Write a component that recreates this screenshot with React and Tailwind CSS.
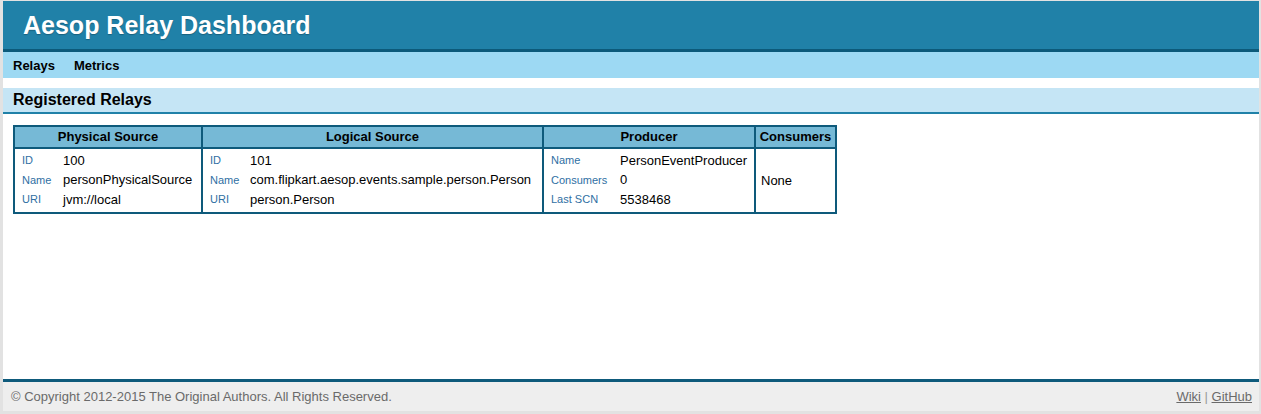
import React from "react";

const font = { fontFamily: '"Liberation Sans", Arial, sans-serif' };

function KV({ rows, labelW }) {
  return (
    <div className="px-[7px] pt-[2px]">
      {rows.map(([k, v]) => (
        <div key={k} className="flex h-[19.5px] items-center">
          <span className={`text-[11px] text-[#2f6fa3] shrink-0 ${labelW}`}>{k}</span>
          <span className="text-[13px] text-black whitespace-nowrap">{v}</span>
        </div>
      ))}
    </div>
  );
}

export default function App() {
  return (
    <div
      style={font}
      className="w-[1261px] h-[414px] bg-[#e2e2e2] pt-[1px] pl-[3px] pr-[2px] pb-[3px] flex"
    >
      <div className="flex-1 flex flex-col bg-white min-w-0">
        <header className="h-[48px] bg-[#2081a8] flex items-center pl-[20px] border-b-[3px] border-[#0c5a7a] box-content">
          <h1 className="text-white font-bold text-[25px] leading-none [text-shadow:0_1px_1px_rgba(0,0,0,0.25)]">
            Aesop Relay Dashboard
          </h1>
        </header>
        <nav className="h-[26px] bg-[#9dd9f3] flex items-center pl-[10px] gap-[19px] text-[13px] font-bold text-black pt-[1px]">
          <span>Relays</span>
          <span>Metrics</span>
        </nav>
        <div className="h-[10px]" />
        <div className="h-[24px] bg-[#c5e5f5] border-b-2 border-[#2081a8] box-content flex items-center pl-[10px]">
          <h2 className="text-[16px] font-bold text-black">Registered Relays</h2>
        </div>
        <main className="flex-1 pl-[10px] pt-[10px]">
          <div className="inline-grid grid-cols-[186px_339px_210px_79px] grid-rows-[20px_63px] gap-[2px] p-[2px] bg-[#0e5a7b]">
            <div className="bg-[#76b9d6] flex items-center justify-center text-[13px] font-bold">Physical Source</div>
            <div className="bg-[#76b9d6] flex items-center justify-center text-[13px] font-bold">Logical Source</div>
            <div className="bg-[#76b9d6] flex items-center justify-center text-[13px] font-bold">Producer</div>
            <div className="bg-[#76b9d6] flex items-center justify-center text-[13px] font-bold">Consumers</div>
            <div className="bg-white">
              <KV
                labelW="w-[41px]"
                rows={[
                  ["ID", "100"],
                  ["Name", "personPhysicalSource"],
                  ["URI", "jvm://local"],
                ]}
              />
            </div>
            <div className="bg-white">
              <KV
                labelW="w-[40px]"
                rows={[
                  ["ID", "101"],
                  ["Name", "com.flipkart.aesop.events.sample.person.Person"],
                  ["URI", "person.Person"],
                ]}
              />
            </div>
            <div className="bg-white">
              <KV
                labelW="w-[69px]"
                rows={[
                  ["Name", "PersonEventProducer"],
                  ["Consumers", "0"],
                  ["Last SCN", "5538468"],
                ]}
              />
            </div>
            <div className="bg-white flex items-center pl-[5px] text-[13px]">None</div>
          </div>
        </main>
        <footer className="h-[29px] bg-[#eeeeee] border-t-[3px] border-[#0e5a7b] box-content flex items-center justify-between pl-[8px] pr-[7px] text-[13px] text-[#6a6a6a]">
          <span>© Copyright 2012-2015 The Original Authors. All Rights Reserved.</span>
          <span>
            <a className="underline text-[#6a6a6a]">Wiki</a>
            <span className="text-[#999]"> | </span>
            <a className="underline text-[#6a6a6a]">GitHub</a>
          </span>
        </footer>
      </div>
    </div>
  );
}
